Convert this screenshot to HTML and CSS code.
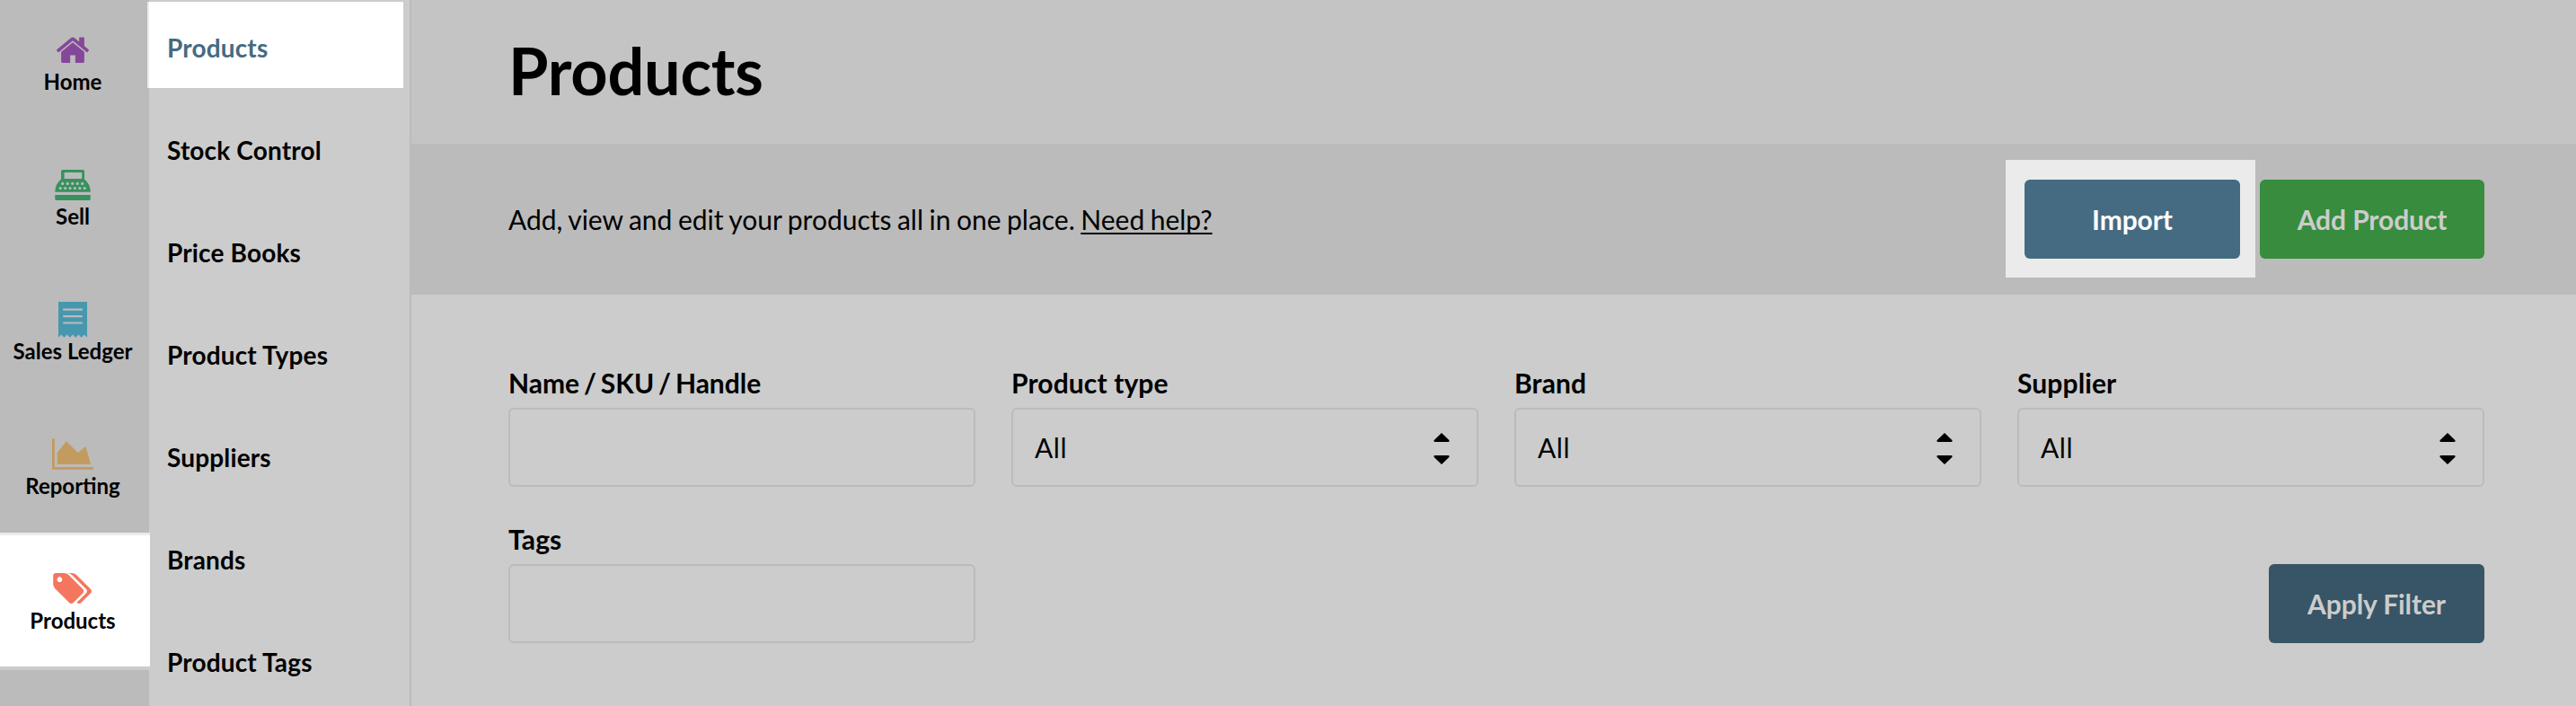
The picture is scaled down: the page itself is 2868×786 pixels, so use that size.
FILE: index.html
```
<!DOCTYPE html>
<html lang="en">
<head>
<meta charset="utf-8">
<title>Products</title>
<link rel="stylesheet" href="styles.css">
</head>
<body>
<div class="app">
  <nav class="rail">
    <a class="rail-item">
      <svg class="rail-icon" viewBox="0 0 60 46"><path class="icon-home" transform="translate(11.45 5.75) scale(.0223)" d="M1408 992v480q0 26-19 45t-45 19h-384v-384h-256v384h-384q-26 0-45-19t-19-45v-480q0-1 .5-3t.5-3l575-474 575 474q1 2 1 6zm223-69l-62 74q-8 9-21 11h-3q-13 0-21-7l-692-577-692 577q-12 8-24 7-13-2-21-11l-62-74q-8-10-7-23.500t11-21.500l719-599q32-26 76-26t76 26l244 204v-195q0-14 9-23t23-9h192q14 0 23 9t9 23v408l219 182q10 8 11 21.500t-7 23.500z"/></svg>
      <span class="rail-label">Home</span>
    </a>
    <a class="rail-item">
      <svg class="rail-icon" viewBox="0 0 60 46">
        <path class="icon-sell" fill-rule="evenodd" d="M19 9h22q2 0 2 2v8.500q6.700 5.500 6.700 14.200H10.300q0-8.700 6.700-14.200V11q0-2 2-2zm1.600 3v7h19.600v-7z"/>
        <path class="icon-sell" d="M10.300 37h39.400v4.500q0 1.500-1.500 1.500H11.800q-1.500 0-1.500-1.500z"/>
        <g class="icon-cutout">
          <circle cx="18.700" cy="24.400" r="1.600"/><circle cx="24.200" cy="24.400" r="1.600"/><circle cx="29.700" cy="24.400" r="1.600"/><circle cx="35.200" cy="24.400" r="1.600"/><circle cx="40.700" cy="24.400" r="1.600"/>
          <circle cx="16.200" cy="29.500" r="1.600"/><circle cx="21.600" cy="29.500" r="1.600"/><circle cx="27" cy="29.500" r="1.600"/><circle cx="32.400" cy="29.500" r="1.600"/><circle cx="37.800" cy="29.500" r="1.600"/><circle cx="43.200" cy="29.500" r="1.600"/>
        </g>
      </svg>
      <span class="rail-label">Sell</span>
    </a>
    <a class="rail-item">
      <svg class="rail-icon" viewBox="0 0 60 46">
        <path class="icon-ledger" d="M14 6h32v39.700l-3.200-3.200-3.200 3.200-3.200-3.200-3.200 3.200-3.200-3.200-3.200 3.200-3.200-3.200-3.200 3.200-3.200-3.200-3.200 3.200z"/>
        <path class="icon-lines" d="M20 14.700h20M20 22.100h20M20 29.500h20"/>
      </svg>
      <span class="rail-label">Sales Ledger</span>
    </a>
    <a class="rail-item">
      <svg class="rail-icon" viewBox="0 0 60 46"><path class="icon-report" transform="translate(7 8.300) scale(.02246)" d="M2048 1408v128h-2048v-1536h128v1408h1920zm-384-1024l256 896h-1664v-576l448-576 576 576z"/></svg>
      <span class="rail-label">Reporting</span>
    </a>
    <a class="rail-item rail-item-active">
      <svg class="rail-icon" viewBox="0 0 60 46"><path class="icon-tags" transform="translate(8.200 5.100) scale(.0225)" d="M448 448q0-53-37.500-90.500t-90.500-37.500-90.500 37.500-37.500 90.500 37.500 90.500 90.500 37.500 90.500-37.500 37.500-90.500zm1067 576q0 53-37 90l-491 492q-39 37-91 37-53 0-90-37l-715-716q-38-37-64.500-101t-26.500-117v-416q0-52 38-90t90-38h416q53 0 117 26.500t102 64.500l715 714q37 39 37 91zm384 0q0 53-37 90l-491 492q-39 37-91 37-36 0-59-14t-53-45l470-470q37-37 37-90 0-52-37-91l-715-714q-38-38-102-64.500t-117-26.500h224q53 0 117 26.500t102 64.500l715 714q37 39 37 91z"/></svg>
      <span class="rail-label">Products</span>
    </a>
  </nav>
  <nav class="subnav">
    <a class="subnav-item subnav-item-active">Products</a>
    <a class="subnav-item">Stock Control</a>
    <a class="subnav-item">Price Books</a>
    <a class="subnav-item">Product Types</a>
    <a class="subnav-item">Suppliers</a>
    <a class="subnav-item">Brands</a>
    <a class="subnav-item">Product Tags</a>
  </nav>
  <main class="main">
    <header class="page-header"><h1 class="page-title">Products</h1></header>
    <section class="toolbar">
      <p class="intro">Add, view and edit your products all in one place. <a class="help-link">Need help?</a></p>
      <div class="actions">
        <div class="spotlight"><button class="button button-import">Import</button></div>
        <button class="button button-add">Add Product</button>
      </div>
    </section>
    <form class="filters">
      <div class="field">
        <label class="label label-name">Name / SKU / Handle</label>
        <div class="control"></div>
      </div>
      <div class="field">
        <label class="label">Product type</label>
        <div class="control"><span>All</span><svg class="arrows" viewBox="0 0 18 84"><path d="M9 26l8.300 8q1 2-1 2H1.700q-2 0-1-2zM9 61l8.300-8q1-2-1-2H1.700q-2 0-1 2z"/></svg></div>
      </div>
      <div class="field">
        <label class="label">Brand</label>
        <div class="control"><span>All</span><svg class="arrows" viewBox="0 0 18 84"><path d="M9 26l8.300 8q1 2-1 2H1.700q-2 0-1-2zM9 61l8.300-8q1-2-1-2H1.700q-2 0-1 2z"/></svg></div>
      </div>
      <div class="field">
        <label class="label">Supplier</label>
        <div class="control"><span>All</span><svg class="arrows" viewBox="0 0 18 84"><path d="M9 26l8.300 8q1 2-1 2H1.700q-2 0-1-2zM9 61l8.300-8q1-2-1-2H1.700q-2 0-1 2z"/></svg></div>
      </div>
      <div class="field">
        <label class="label">Tags</label>
        <div class="control"></div>
      </div>
      <button class="button button-apply" type="button">Apply Filter</button>
    </form>
  </main>
</div>
</body>
</html>
```

FILE: styles.css
```
*, *::before, *::after { box-sizing: border-box; }
body { margin: 0; font-family: Lato, "Open Sans", sans-serif; color: #000; background: #ccc; overflow: hidden; }
.app { display: flex; height: 786px; }

.rail { width: 166px; background: #bbb; }
.rail-item { position: relative; display: flex; flex-direction: column; align-items: center; width: 162px; height: 150px; padding-top: 30px; }
.rail-icon { position: relative; width: 60px; height: 46px; }
.rail-label { position: relative; font-size: 24px; line-height: 30px; font-weight: 700; white-space: nowrap; }
.rail-item-active { z-index: 2; }
.rail-item-active::before { content: ""; position: absolute; left: 0; top: -7px; width: 167px; height: 149px; background: #fff; border-top: 3px solid #ebebeb; }
.rail-item-active::after { content: ""; position: absolute; left: 0; top: 142px; width: 166px; height: 4px; background: #ccc; }

.icon-home { fill: #85479a; }
.icon-sell { fill: #38915f; }
.icon-cutout { fill: #bbb; }
.icon-ledger { fill: #4797ae; }
.icon-lines { stroke: #bbb; stroke-width: 2.2; stroke-linecap: round; }
.icon-report { fill: #c39b5e; }
.icon-tags { fill: #f4765e; }

.subnav { display: flex; flex-direction: column; width: 292px; border-right: 2px solid #bbb; }
.subnav-item { position: relative; z-index: 0; flex: 0 0 114px; padding-left: 20px; font-size: 28px; line-height: 106px; font-weight: 700; letter-spacing: .15px; }
.subnav-item-active { color: #456b82; }
.subnav-item-active::before { content: ""; position: absolute; z-index: -1; left: -2px; top: 2px; width: 285px; height: 96px; background: #fff; border-left: 2px solid #ebebeb; }

.main { flex: 1; }
.page-header { height: 160px; padding-left: 108px; background: #c4c4c4; }
.page-title { margin: 0; font-size: 72px; line-height: 156px; font-weight: 700; letter-spacing: -.25px; }
.toolbar { display: flex; align-items: center; justify-content: space-between; height: 168px; padding: 0 102px 0 108px; background: #bbb; }
.intro { margin: 0; font-size: 30px; line-height: 36px; word-spacing: -1.2px; }
.help-link { text-decoration: underline; text-decoration-thickness: 2px; text-underline-offset: 3px; text-decoration-skip-ink: none; }
.actions { display: flex; gap: 22px; }
.spotlight { position: relative; z-index: 0; }
.spotlight::before { content: ""; position: absolute; z-index: -1; inset: -22px -17px -21px -21px; background: #ebebeb; }

.button { width: 240px; height: 88px; padding: 0; border: 0; border-radius: 6px; font-family: inherit; font-size: 30px; line-height: 36px; font-weight: 700; letter-spacing: -.1px; color: #ccc; }
.button-import { display: block; background: #456b82; color: #fff; }
.button-add { width: 250px; background: #378c3d; }
.button-apply { grid-column: 4; align-self: end; justify-self: end; background: #375566; }

.filters { display: grid; grid-template-columns: repeat(4, 520px); gap: 40px; padding: 80px 0 0 108px; }
.field { display: flex; flex-direction: column; gap: 10px; }
.label { font-size: 30px; line-height: 36px; font-weight: 700; letter-spacing: .12px; }
.label-name { letter-spacing: 0; word-spacing: -2.4px; }
.control { display: flex; align-items: center; justify-content: space-between; height: 88px; padding: 0 30px 0 24px; border: 2px solid #bbb; border-radius: 6px; font-size: 30px; line-height: 36px; letter-spacing: .6px; }
.arrows { width: 18px; height: 84px; }
```
